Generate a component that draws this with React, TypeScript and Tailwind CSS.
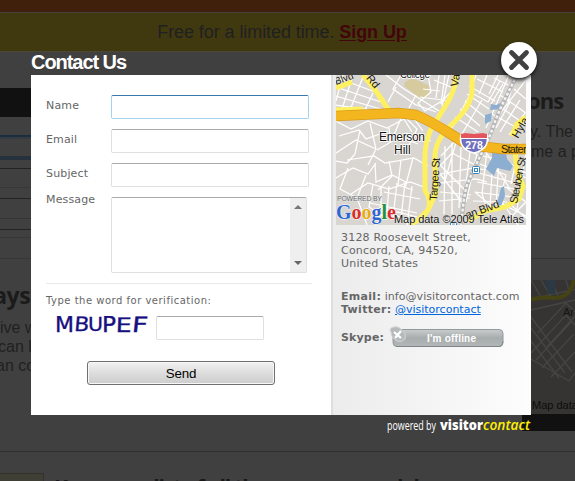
import React from "react";

const arial = "font-['Liberation_Sans',Arial,sans-serif]";
const verdana = "font-['DejaVu_Sans',Verdana,sans-serif]";

function Backdrop() {
  return (
    <div className={"flex h-[481px] w-[575px] flex-col overflow-hidden bg-[#404040] " + arial}>
      <div className="h-3 shrink-0 bg-[#40200b]" />
      <div className="flex h-[40px] shrink-0 justify-center border-y border-t-[#45403a] border-b-[#4b4731] bg-[#403910] pr-[11px] text-[18px] leading-[39px] tracking-[-0.08px] text-[#202020]">
        <span className="whitespace-nowrap">
          Free for a limited time. <a className="font-bold text-[#43050b] underline underline-offset-2">Sign Up</a>
        </span>
      </div>
      <div className="flex h-[399px] shrink-0 justify-between">
        <div className="w-[60px] overflow-hidden">
          <div className="mt-9 h-[29px] bg-[#111]" />
          <div className="h-[18px]" />
          <div className="h-[4px] border-t-2 border-[#1c2d3e] bg-[#343b43]" />
          <div className="h-[17px]" />
          <div className="h-[4px] bg-[#25313d]" />
          <div className="h-[8px]" />
          <div className="h-[20px] border-y border-t-[#232323] border-b-[#373737]" />
          <div className="h-[10px]" />
          <div className="h-[21px] border-y border-t-[#232323] border-b-[#343434]" />
          <div className="h-[10px]" />
          <div className="h-[9px] border-y border-t-[#232323] border-b-[#373737]" />
          <div className="h-[21px] border-b border-[#373737]" />
          <div className="-ml-[26px] mt-[20px] text-[23px] leading-[32px] font-bold font-['Open_Sans',sans-serif] tracking-[-0.5px] whitespace-nowrap text-[#1b1b1b]">ways</div>
          <div className="mt-[7px] text-[16px] leading-[19px] whitespace-nowrap text-[#202020]">
            <div>ive w</div><div className="-ml-[2px]">can b</div><div className="-ml-[4px]">an com</div>
          </div>
        </div>
        <div className="w-[53px] overflow-hidden">
          <div className="mt-[33px] pl-[5px] text-[22px] leading-[30px] font-bold font-['Open_Sans',sans-serif] tracking-[-0.9px] text-[#1b1b1b]">ons</div>
          <div className="mt-[7px] h-[137px] border-b border-[#333] pl-[8px] text-[16px] leading-[20px] whitespace-nowrap text-[#202020]">
            <div>y. The</div><div className="pl-[1px]">me a p</div>
          </div>
          <svg className="mt-[21px] block" width="53" height="134">
            <rect width="53" height="134" fill="#353433" />
            <g fill="none" stroke="#464544" strokeWidth="1.3">
              <path d="M9 0l10 17 36-8M19 0l12 20M29 0l7 16M44 0l4 14M9 30l44-10M9 37l41 55M9 48l34 45M9 61l28 37M9 73l35-38M14 80l36-39M20 88l32-34M29 97l24-25M16 53l28-30 9 9M25 67l28-31" />
              <path d="M9 79l38 22 6-8M44 35l9 10" />
            </g>
            <path d="M23 0l3 13 7 2V0z" fill="#2b3944" />
            <path d="M9 20c17-7 26 3 37-7 4-4 5-9 6-13" fill="none" stroke="#454213" strokeWidth="4" />
            <text x="41" y="36" fontSize="11" fill="#151515">Ar</text>
            <text x="10" y="129" fontSize="11" fill="#0c0c0c">Map data</text>
          </svg>
          <div className="h-[17px] bg-[#111]" />
        </div>
      </div>
      <div className="flex h-[30px] shrink-0 border-t border-[#303030] pt-[21px]">
        <div className="h-[30px] w-[44px] border border-l-0 border-[#333129] bg-[#403f35]" />
        <div className="pl-[10px] text-[21px] leading-[29px] font-bold font-['Open_Sans',sans-serif] tracking-[-1.2px] whitespace-nowrap text-[#181818]">Keep your list of all the messages and d</div>
      </div>
    </div>
  );
}

function Field({ label, active = false }: { label: string; active?: boolean }) {
  return (
    <label className="flex h-[34px] items-start">
      <span className="w-[65px] pt-[4px] text-[11px] leading-[14px] tracking-[0.15px]">{label}</span>
      <input
        className={
          "h-6 w-[198px] rounded-[2px] border bg-white outline-none " +
          (active ? "border-[#a6d3ee] border-t-[#3c79aa]" : "border-[#dddfe2] border-t-[#a8a9ad]")
        }
      />
    </label>
  );
}

function AreaMap() {
  return (
    <svg className="block" width="190" height="150" viewBox="0 0 190 150" fontFamily="Liberation Sans, Arial, sans-serif">
      <rect width="190" height="150" fill="#d9d6d1" />
      <path d="M69 7l7-4 18 8-2 11-8 1-16-12z" fill="#d6ca9f" />
      <g fill="none" stroke="#fff" strokeWidth="1.25">
        <path d="M0 12l45 15M0 21l48 14M0 30l36 5M7 0L0 26M17 0L6 34M27 2L14 35M37 18l-8 17M2 3l37 14M50 0l18 14 21 13 14 9M65 0l-8 14 23 16M60 12l-8 15M80 20l-7 13" />
        <path d="M92 0l3 17-13 11 7 8 17-10 12-12M98 5l17 7M103 0l-3 23M109 0l-4 29M113 0l-7 31M87 14l17 2M84 22l30 4M78 29l22 8" />
        <path d="M140 0l-6 17 18 10 12-21M151 0l-8 19M162 0l-9 19M173 0l-23 53M133 11l26 15M141 4l26 13M131 19l22 15M129 26l21 17M124 34l20 17M119 42l23 15M146 25l-20 34M136 16l-20 37M167 9l-12 20M158 3l14 7" />
        <path d="M190 5l-32 41M179 0l-7 27M164 20l26 18M160 29l30 21M156 39l27 15M178 14l12 10M184 25l-20 32M174 27l-14 26M189 38l-16 22" />
        <path d="M0 46l15 8 17-8 19 7 17-9 8 13M3 61l20-6 7 9 22-8M0 78l20-13 20 9M24 55l-5 24-8 9-11-2M34 48l6 26-8 16M53 53l2 14-14 8M65 43l-7 17 24 9M69 42l12 12-8 16M76 41l11 15M70 58l25 8" />
        <path d="M11 85l27-4 11 7 29-5 14 8M0 103l17-10 15 6 8-11M12 93l-8 21 17 9 10 27M30 100l-9 23M39 88l1 19 16-7 14 7M53 86l3 15-14 14M65 85l-3 25 15 5M77 83l-8 30" />
        <path d="M15 119l17-11 21 6 21-7 14 5M37 109l-4 23 15 9M45 112v26M53 111l-2 27M61 108l-4 34M69 107l-4 37M76 111l-5 39M34 128l47 10M48 117l36 7M43 132l35 17M37 143l24-6 20 5" />
        <path d="M105 81l16-17 20 16 16 3M104 91l12-13 27 14M104 99l34-6 12 2M104 108l36-4 11 3M104 117l31 3M103 126l31-3M109 71l-1 68M116 68v71M125 72l-2 61M134 77l-7 55M141 79l-11 48M121 64l-13 45M103 89l28 28M104 99l24 31" />
        <path d="M151 75l-5 44 6 17M157 80l-3 52M163 87l-3 43M170 100l-8 33M144 89l26 11M143 98l36 10M141 107l43 8M139 117l37 5M137 126l34 1M148 74l26 40M139 117l22 19M184 68l-9 41M190 78l-9 56M175 89l15 9M178 96l12 7M171 113l19 14M162 127l28 14M142 138l32-9 16 14M170 147l20-20M182 150l-16-23" />
      </g>
      <path fill="#8caed0" d="M155 29l5 1 7-3-2 7-11 1zM149 40l7-2-1 8-6 3zM156 72h13l2 12 6 7-3 5-13-3-3 8-8-7 6-11zM165 113l3-2 1 10-4 10-4-2z" />
      <g fill="none" stroke="#fff060" strokeWidth="5">
        <path d="M0 35l27-1M0 13l16-6M27 0l13 16 14 21M120 0c1 16-13 35-22 49-7 10-10 25-9 44v22c8 14 6 24-14 34M136 0v18c-3 16-15 27-26 37-10 12-12 22-11 34l1 29-8 17-12 12M179 75l2 22 6 14-4 13-14 8-20 4-17 10M176 61l5-12 9-7" />
      </g>
      <path d="M181 0c-8 16-17 33-23 49-7 22-17 36-27 61-4 14-4 25-6 40" fill="none" stroke="#b4b4b4" strokeWidth="4" />
      <path d="M181 0c-8 16-17 33-23 49-7 22-17 36-27 61-4 14-4 25-6 40" fill="none" stroke="#f3f3f3" strokeWidth="2.4" strokeDasharray="3 2" />
      <path d="M0 41l62-3 18 2c24 10 37 22 53 30l34 4h23" fill="none" stroke="#d99b19" strokeWidth="10.5" />
      <path d="M0 41l62-3 18 2c24 10 37 22 53 30l34 4h23" fill="none" stroke="#f3b61e" strokeWidth="9" />
      <path d="M125 60l4-1q9 3 18 0l4 1q3 14-13 18-16-4-13-18z" fill="#6f70bd" stroke="#fff" strokeWidth="1.6" />
      <path d="M125 59l4-1 9 1 9-1 4 1v4h-26z" fill="#e3555b" />
      <path d="M124 63.5h28" stroke="#fff" />
      <text x="138" y="74" textAnchor="middle" fontSize="10.5" fontWeight="bold" fill="#fff">278</text>
      <rect x="136.5" y="91.5" width="7" height="7" rx="1" fill="#fff" stroke="#3985bb" />
      <rect x="138.5" y="93.5" width="3" height="3" fill="none" stroke="#3985bb" />
      <path d="M114.5 150v-3h6v3M116 149h3" fill="#fff" stroke="#3985bb" />
      <g fill="#111" stroke="#fff" strokeWidth="1.5" paintOrder="stroke" fontSize="11">
        <text x="43" y="66" fontSize="12" textLength="46">Emerson</text>
        <text x="58" y="79" fontSize="12">Hill</text>
        <text x="64" y="2.5" fontSize="10" textLength="30">College</text>
      </g>
      <g fill="#1c1a0c" fontSize="11">
        <text transform="translate(0 10) rotate(-20)" fontSize="10">Blvd</text>
        <text transform="translate(24 -4) rotate(51)">n Rd</text>
        <text transform="translate(122 12) rotate(-82)">Van</text>
        <text transform="translate(101 126) rotate(-86)" textLength="43">Targee St</text>
        <text transform="translate(181 129) rotate(-79)" textLength="47">Steuben St</text>
        <text transform="translate(182 64) rotate(-60)">Hyla</text>
        <text x="165" y="78" textLength="28">Staten</text>
        <text transform="translate(131 144) rotate(-20)" textLength="35">an Blvd</text>
      </g>
      <text x="1" y="126" fontSize="7" textLength="45" fill="#66666a" stroke="#eee" strokeWidth=".7" paintOrder="stroke">POWERED BY</text>
      <text x="0" y="144" fontFamily="Liberation Serif, serif" fontSize="22" fontWeight="bold" textLength="60" lengthAdjust="spacingAndGlyphs" stroke="#fff" strokeWidth="1" paintOrder="stroke">
        <tspan fill="#2d65d1">G</tspan><tspan fill="#d72d2c">o</tspan><tspan fill="#e5ae16">o</tspan><tspan fill="#2d65d1">g</tspan><tspan fill="#24903b">l</tspan><tspan fill="#d72d2c">e</tspan>
      </text>
      <text x="58" y="147.5" fontSize="11" textLength="130" fill="#111" stroke="#eee" strokeWidth=".6" paintOrder="stroke">Map data ©2009 Tele Atlas</text>
    </svg>
  );
}

function ContactForm() {
  return (
    <section className={"h-[340px] w-[300px] shrink-0 bg-white pt-5 pl-[15px] text-[#666] " + verdana}>
      <Field label="Name" active />
      <Field label="Email" />
      <Field label="Subject" />
      <div className="flex h-[86px] items-start">
        <span className="-mt-[4px] w-[65px] text-[11px] leading-[14px] tracking-[0.15px]">Message</span>
        <div className="flex h-[76px] w-[196px] justify-end rounded-[2px] border border-[#dddfe2] border-t-[#a8a9ad]">
          <div className="flex w-4 flex-col items-center justify-between bg-[#efefef] py-[6px]">
            <svg width="8" height="5"><path d="M0 5l4-4 4 4z" fill="#777" /></svg>
            <svg width="8" height="5"><path d="M0 0h8L4 4z" fill="#666" /></svg>
          </div>
        </div>
      </div>
      <div className="w-[266px] border-t border-[#e9e9eb] pt-[10px]">
        <div className="text-[10px] leading-[14px] tracking-[0.5px] whitespace-nowrap">Type the word for verification:</div>
        <div className="mt-[8px] flex">
          <svg className="ml-[9px] shrink-0" width="101" height="24" fontFamily="DejaVu Sans, sans-serif" fontSize="21" fill="#171080" stroke="#171080" strokeWidth=".35">
            <text x="0" y="16" textLength="19" lengthAdjust="spacingAndGlyphs">M</text>
            <text x="20" y="15" fontSize="20" transform="skewX(-5)" textLength="15" lengthAdjust="spacingAndGlyphs">B</text>
            <text x="33" y="14.5" fontSize="20" textLength="15" lengthAdjust="spacingAndGlyphs">U</text>
            <text x="47" y="16" fontSize="21" textLength="14" lengthAdjust="spacingAndGlyphs">P</text>
            <text x="61" y="15.5" fontSize="20" transform="skewX(-2)" textLength="16" lengthAdjust="spacingAndGlyphs">E</text>
            <text x="78" y="16" fontSize="21" transform="skewX(-6)" textLength="16" lengthAdjust="spacingAndGlyphs">F</text>
          </svg>
          <input className="h-6 w-[108px] rounded-[2px] border border-[#dddfe2] border-t-[#a8a9ad] bg-white" />
        </div>
      </div>
      <button className={"mt-[21px] ml-[41px] block h-6 w-[188px] rounded-[3px] border border-[#707070] bg-linear-to-b from-[#f2f2f2] from-0% via-[#dddddd] via-50% to-[#cdcdcd] text-[13.33px] leading-[21px] tracking-[-0.2px] text-black shadow-[inset_0_0_0_1px_#f7f7f7] " + arial}>
        Send
      </button>
    </section>
  );
}

function ContactDetails() {
  return (
    <section className={"h-[340px] w-[200px] border-l-2 border-[#dedede] bg-linear-to-r from-[#ececec] to-[#fdfdfd] text-[11px] leading-[13px] text-[#666] " + verdana}>
      <div className="pl-[3px]"><AreaMap /></div>
      <div className="pt-[6px] pl-[8px] whitespace-nowrap">
        <p className="tracking-[0.2px]">3128 Roosevelt Street,<br />Concord, CA, 94520,<br />United States</p>
        <p className="mt-5"><b className="tracking-[0.3px]">Email:</b> <span className="tracking-[0.06px]">info@visitorcontact.com</span><br /><b className="tracking-[0.3px]">Twitter:</b> <a className="text-[#0066dd] underline">@visitorcontact</a></p>
        <div className="mt-[10px] flex items-center">
          <b className="w-[48px] tracking-[0.15px]">Skype:</b>
          <svg width="116" height="22" className="shrink-0">
            <defs>
              <linearGradient id="skypeButton" x2="0" y2="1"><stop stopColor="#c9cdcd" /><stop offset=".5" stopColor="#a7acac" /><stop offset="1" stopColor="#b3b7b7" /></linearGradient>
            </defs>
            <rect x="4" y="3.5" width="110" height="17" rx="4" fill="url(#skypeButton)" stroke="#92999a" />
            <path d="M7 20.5h104q3-1 3-5" fill="none" stroke="#7f8586" />
            <path d="M2 2q6-3 10 1 6 5 4 10-3 4-8 2-6-3-6-9-2-2 0-4z" fill="#b6baba" stroke="#d3d6d6" />
            <path d="M5 6l7 6m0-7l-6 7" stroke="#fff" strokeWidth="2.3" />
            <text x="38" y="16" fill="#fff" fontSize="10" fontWeight="bold" fontFamily="Liberation Sans, Arial, sans-serif" textLength="49">I'm offline</text>
          </svg>
        </div>
      </div>
    </section>
  );
}

export default function App() {
  return (
    <main className="relative h-[481px] w-[575px] overflow-hidden">
      <Backdrop />
      <div role="dialog" aria-label="Contact Us" className="absolute top-[49px] left-[31px] w-[500px]">
        <h1 className={"h-[26px] text-[20px] leading-[26px] font-bold tracking-[-1.05px] text-white " + arial}>Contact Us</h1>
        <div className="flex"><ContactForm /><ContactDetails /></div>
        <footer className="flex h-5 items-center justify-end">
          <svg width="144" height="20" fill="#fff" fontFamily="Open Sans, sans-serif">
            <text x="0" y="15" fontSize="12.5" textLength="49" lengthAdjust="spacingAndGlyphs">powered by</text>
            <text x="53" y="15" fontSize="14.5" fontWeight="800" textLength="43" lengthAdjust="spacingAndGlyphs">visitor</text>
            <text x="96" y="15" fontSize="14.5" fontWeight="600" fontStyle="italic" fill="#fff000" textLength="47" lengthAdjust="spacingAndGlyphs">contact</text>
          </svg>
        </footer>
        <button aria-label="Close" className="absolute -top-[7px] left-[470px] grid size-9 place-items-center rounded-full bg-white shadow-[0_2px_4px_#111]">
          <svg width="22" height="22"><path d="M3.5 3.5l15 15m0-15l-15 15" stroke="#414141" strokeWidth="4.8" strokeLinecap="round" /></svg>
        </button>
      </div>
    </main>
  );
}
